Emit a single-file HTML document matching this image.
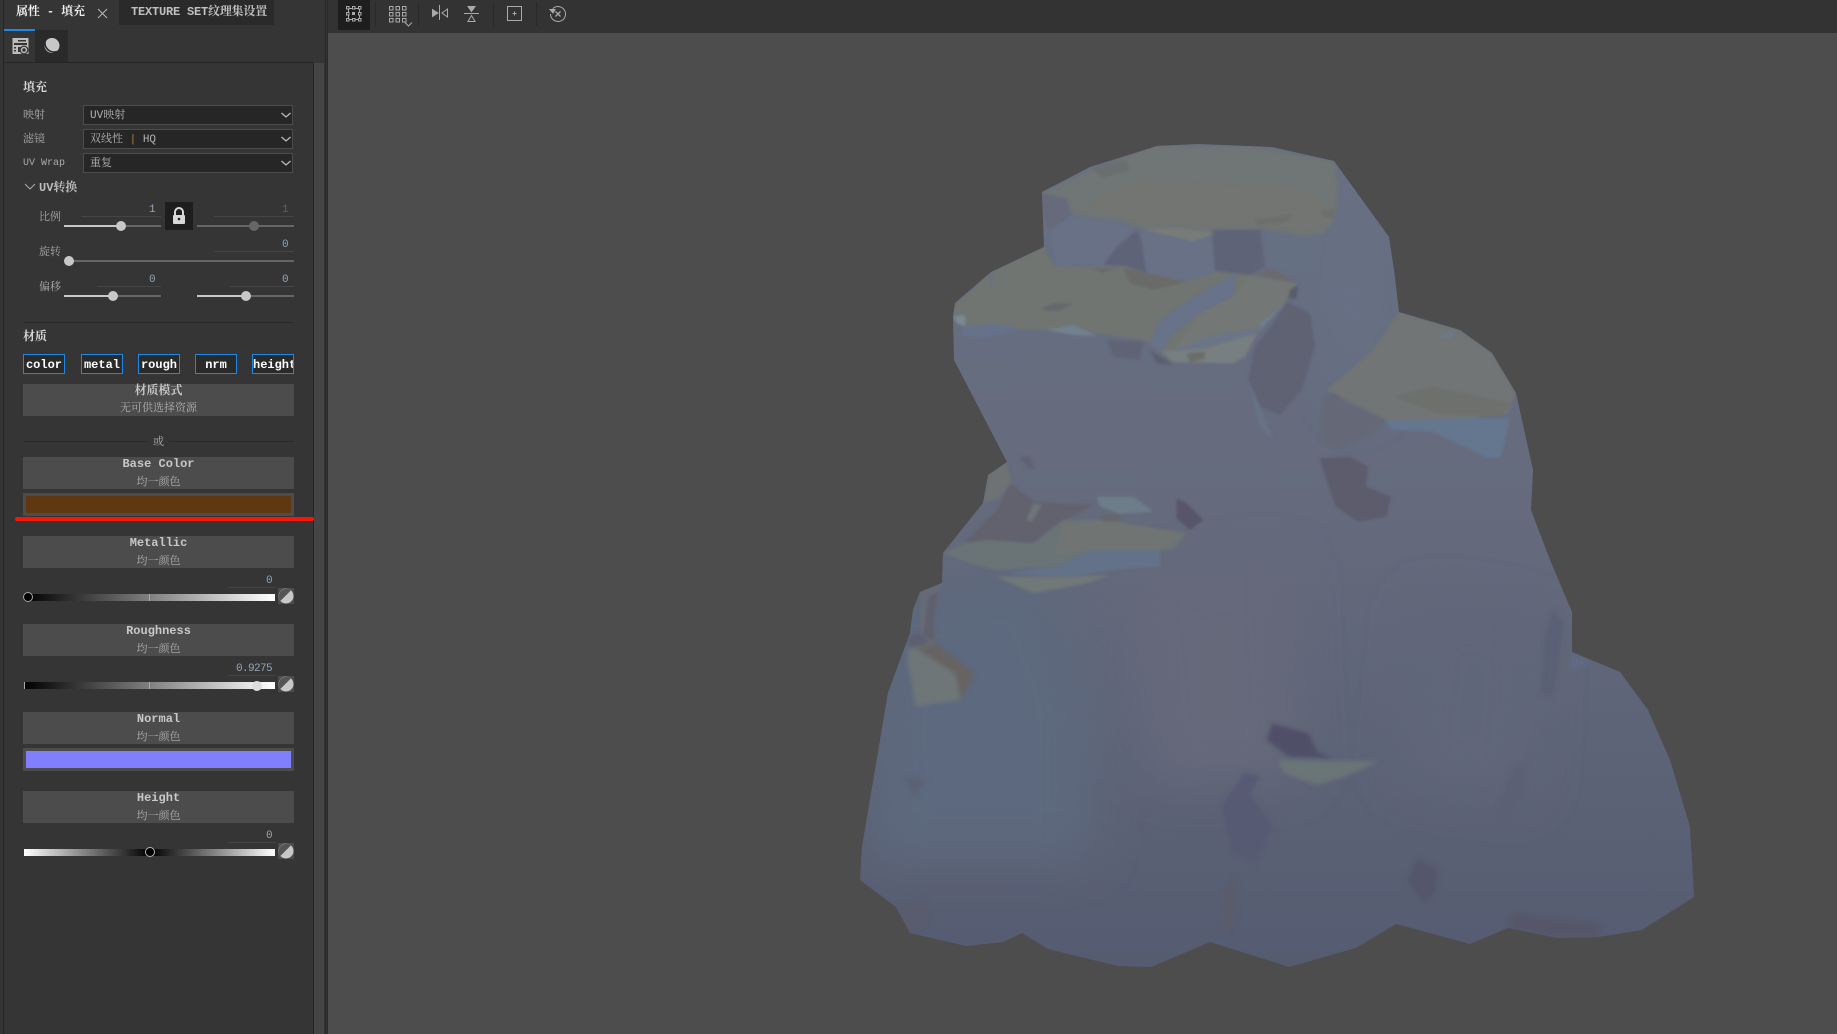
<!DOCTYPE html>
<html lang="zh"><head><meta charset="utf-8"><title>属性 - 填充</title>
<style>
html,body{margin:0;padding:0;background:#4d4d4d}
#r{position:relative;width:1837px;height:1034px;overflow:hidden;background:#4d4d4d;font-family:"Liberation Mono","Noto Serif CJK SC",serif;color:#c4c4c4;font-size:11px}
#r div,#r svg{position:absolute}
.t{line-height:14px;white-space:nowrap}
.b{font-weight:bold;font-size:12px;color:#d8d8d8}
.l{color:#aaa}
.n{font-size:11px;letter-spacing:-.6px;color:#94a4b8;text-align:right;width:50px}
.u{height:1px;background:#454545}
.dd{left:83px;width:208px;height:18px;background:#262626;border:1px solid #4c4c4c;line-height:21px;color:#b4b4b4;text-indent:6px}
.tr{height:2px;background:#666}
.fl{height:2px;background:#c8c8c8}
.k{width:10px;height:10px;border-radius:50%;background:#c8c8c8}
.bt{top:354px;height:18px;width:40px;border:1px solid #1e88e8;background:#2a2a2a;color:#fff;font-weight:bold;font-size:12px;line-height:20px;text-align:center}
.bx{left:23px;width:271px;height:32px;background:#4c4c4c}
.ct{left:23px;width:271px;text-align:center;line-height:14px}
.gr{left:24px;width:251px;height:7px;background:linear-gradient(90deg,#000,#fff)}
</style></head><body><div id="r">

<!-- viewport -->
<div style="left:328px;top:0;width:1509px;height:33px;background:#333"></div>
<div style="left:338px;top:0;width:32px;height:30px;background:#1e1e1e"></div>
<div style="left:375px;top:2px;width:1px;height:24px;background:#292929"></div>
<div style="left:418px;top:2px;width:1px;height:24px;background:#292929"></div>
<div style="left:493px;top:2px;width:1px;height:24px;background:#292929"></div>
<div style="left:536px;top:2px;width:1px;height:24px;background:#292929"></div>
<svg style="left:330px;top:0" width="260" height="33" viewBox="0 0 260 33" fill="none" stroke="#aaa" stroke-width="1">
<rect x="18.500" y="8.500" width="11" height="11"/>
<g fill="#1e1e1e"><rect x="16.500" y="6.500" width="2.500" height="2.500"/><rect x="22.500" y="6.500" width="2.500" height="2.500"/><rect x="28.500" y="6.500" width="2.500" height="2.500"/><rect x="16.500" y="12.500" width="2.500" height="2.500"/><rect x="28.500" y="12.500" width="2.500" height="2.500"/><rect x="16.500" y="18.500" width="2.500" height="2.500"/><rect x="22.500" y="18.500" width="2.500" height="2.500"/><rect x="28.500" y="18.500" width="2.500" height="2.500"/></g>
<rect x="22.500" y="12.500" width="2" height="2" fill="#aaa"/>
<g><rect x="59.500" y="6.500" width="3.500" height="3.500"/><rect x="66" y="6.500" width="3.500" height="3.500"/><rect x="72.500" y="6.500" width="3.500" height="3.500"/><rect x="59.500" y="12.500" width="3.500" height="3.500"/><rect x="66" y="12.500" width="3.500" height="3.500"/><rect x="72.500" y="12.500" width="3.500" height="3.500"/><rect x="59.500" y="18.500" width="3.500" height="3.500"/><rect x="66" y="18.500" width="3.500" height="3.500"/><rect x="72.500" y="18.500" width="3.500" height="3.500"/></g>
<path d="M75 22.500l3.500 3.500 3.500-3.500"/>
<path d="M102.500 9.500l5.500 3.500-5.500 3.500z" fill="#aaa"/><path d="M109.500 5v15"/><path d="M117.500 9l-5.500 4 5.500 4z"/>
<path d="M134 13.500h15"/><path d="M138 6.500h7l-3.500 5z" fill="#aaa"/><path d="M138 21.500h7l-3.500-6z"/>
<rect x="177.500" y="6.500" width="14" height="14"/><path d="M184.500 11.500v4M182.500 13.500h4"/>
<path d="M222.700 8.700A7.500 7.500 0 1 1 220.500 14"/><path d="M220 9.500l3 3.500 2-3.500z" fill="#aaa"/><path d="M225.500 11.500l5 5M230.500 11.500l-5 5" stroke-width="1.300"/>
</svg>

<!-- rock -->
<svg style="left:0;top:0" width="1837" height="1034" viewBox="0 0 1837 1034">
<defs>
<linearGradient id="g" x1="0" y1="0" x2="0" y2="1"><stop offset="0" stop-color="#687084"/><stop offset=".45" stop-color="#656b7c"/><stop offset=".75" stop-color="#5d6377"/><stop offset="1" stop-color="#555b70"/></linearGradient>
<filter id="s" filterUnits="userSpaceOnUse" x="800" y="100" width="950" height="900"><feGaussianBlur stdDeviation="1.300"/></filter>
<filter id="l" filterUnits="userSpaceOnUse" x="800" y="100" width="950" height="900"><feGaussianBlur stdDeviation="2.200"/></filter>
<filter id="m" filterUnits="userSpaceOnUse" x="700" y="0" width="1137" height="1034"><feGaussianBlur stdDeviation="24"/></filter>
<clipPath id="c"><path d="M1042 192L1090 167 1157 146 1198 144 1272 147 1334 161 1389 237 1394 270 1399 312 1460 330 1492 353 1516 393 1533 470 1531 510 1550 560 1572 612 1572 652 1620 672 1648 710 1670 760 1690 827 1694 897 1642 930 1598 937 1558 938 1508 928 1470 944 1396 924 1356 948 1289 967 1210 942 1151 967 1118 966 1048 949 1022 933 1003 942 966 946 910 933 896 907 860 880 862 847 888 693 910 633 913 610 920 592 942 583 943 553 983 503 988 475 1007 462 954 360 953 317 955 303 991 272 1044 247z"/></clipPath>
</defs>
<g clip-path="url(#c)">
<rect x="850" y="140" width="850" height="830" fill="url(#g)"/>
<g filter="url(#m)">
<path d="M880 600L1040 560 1090 700 1090 860 870 860z" fill="#5d697e"/>
<path d="M1130 580L1290 560 1300 780 1150 780z" fill="#65697a"/>
<path d="M1340 200L1395 300 1360 420 1310 300z" fill="#667084"/>
<path d="M1420 600L1540 620 1530 800 1400 780z" fill="#606679"/>
</g>
<g filter="url(#s)">
<!-- top rock -->
<g transform="translate(1040 140) scale(.3333)">
<path d="M5 160L150 90 350 17 640 20 885 65 895 140 885 240 850 280 790 290 660 265 630 275 530 265 520 280 460 305 310 265 240 245 100 225 80 180z" fill="#707574"/>
<path d="M300 120L800 150 880 230 850 275 650 260 300 250 150 190z" fill="#727571"/>
<path d="M155 85L260 60 270 90 190 115z" fill="#6b6e70"/>
<path d="M640 240L760 225 740 245 660 255zM840 215L885 205 885 235 850 230z" fill="#6c6e6c"/>
<path d="M5 160L80 175 90 225 30 275 10 230z" fill="#666a7a"/>
<path d="M30 270L100 228 250 250 300 280 310 268 460 305 525 280 525 390 450 430 330 405 260 380 45 380z" fill="#687186"/>
<path d="M190 375L230 320 290 270 305 300 320 405 260 380z" fill="#5f6478"/>
<path d="M515 270L660 268 675 380 620 410 525 390z" fill="#5f6377"/>
<path d="M310 268L460 305 525 280 420 265z" fill="#787c78"/>
<path d="M675 275L790 295 850 285 840 400 760 400 680 380z" fill="#667083"/>
</g>
<!-- left rock top -->
<g transform="translate(940 240) scale(.3333)">
<path d="M40 230L45 195 155 95 310 20 345 80 555 78 620 100 740 125 830 95 930 105 1070 130 1040 185 960 270 915 350 880 370 700 370 630 310 610 300 400 270 240 270 170 250 70 260z" fill="#707472"/>
<path d="M150 100L160 95 150 165z" fill="#687080"/>
<path d="M630 310L660 240 760 170 890 100 880 170 780 220 690 290 665 335z" fill="#677288"/>
<path d="M665 335L800 325 950 280 915 350 880 370 700 365z" fill="#787f80"/>
<path d="M700 335L800 290 960 262 950 282 780 325z" fill="#6a7588"/>
<path d="M880 170L930 105 1070 130 1000 230 950 262 800 290 700 335 780 220z" fill="#737774"/>
<path d="M960 250L1040 185 960 272z" fill="#6f7e8a"/>
<path d="M550 85L620 100 740 125 640 150 570 130z" fill="#6a6a68"/>
<path d="M445 85L530 85 490 97z" fill="#69696a"/>
<path d="M740 340L795 335 795 355 750 368z" fill="#6b6d6b"/>
<path d="M940 100L1000 85 1070 130 1020 120z" fill="#6a6b6e"/>
<path d="M305 205L340 190 400 190 360 212 320 212z" fill="#65686c"/>
<path d="M40 230L75 225 75 258 50 250z" fill="#7a8a90"/>
<path d="M320 270L400 255 470 288 400 285z" fill="#728190"/>
<path d="M70 260L170 250 240 270 130 295 60 285z" fill="#66718a"/>
<path d="M500 300L610 305 600 360 520 350z" fill="#606474"/>
<path d="M630 330L700 375 650 370z" fill="#5a5e6e"/>
<path d="M1040 185L1110 220 1125 320 1085 450 1020 525 960 500 925 420 945 320 1000 250z" fill="#5f6273"/>
<path d="M1050 150L1075 135 1070 175 1045 175z" fill="#585b6c"/>
<path d="M925 420L960 500 1000 600 960 560z" fill="#687386"/>
<path d="M1140 540L1165 470 1200 440 1200 625 1160 610z" fill="#5f6374"/>
<path d="M240 650L270 650 285 690 260 680z" fill="#5e6172"/>
</g>
<!-- right rock -->
<g transform="translate(840 120) scale(.4591 .3333)">
<path d="M1217 575L1350 630 1420 700 1472 820 1455 880 1350 900 1190 900 1060 810 1160 690z" fill="#717574"/>
<path d="M1300 650L1340 630 1330 655z" fill="#6a7a8c"/>
<path d="M1060 820L1190 900 1150 950 1080 985 1045 960 1045 880z" fill="#656977"/>
<path d="M1190 900L1350 895 1460 895 1440 1010 1410 1015 1290 935 1200 930z" fill="#65768f"/>
<path d="M1210 830L1290 800 1460 850 1440 890 1300 880z" fill="#6e706e"/>
<path d="M1045 1015L1110 1010 1150 1040 1145 1100 1200 1130 1190 1190 1130 1205 1080 1160 1060 1080z" fill="#5b5c6d"/>
</g>
<!-- lower left ledge -->
<g transform="translate(920 440) scale(.3333)">
<path d="M205 105L260 65 275 130 235 175 190 190z" fill="#6e7274"/>
<path d="M130 310L230 210 270 130 345 185 520 195 400 260 340 310 200 300z" fill="#62626e"/>
<path d="M320 240L340 190 365 195 335 245z" fill="#6e747a"/>
<path d="M70 340L130 310 200 300 340 310 430 240 550 240 800 280 760 330 520 330 400 380 230 390 150 370z" fill="#6b7376"/>
<path d="M430 250L550 240 800 280 720 330 520 330 400 345z" fill="#707573"/>
<path d="M400 380L520 330 720 330 720 380 620 385 440 410 260 400z" fill="#647288"/>
<path d="M230 410L440 410 570 405 500 430 340 460z" fill="#707878"/>
<path d="M530 170L640 170 700 215 600 222 540 200z" fill="#6d7d8a"/>
<path d="M540 225L610 225 590 245 550 245z" fill="#656766"/>
<path d="M770 175L800 190 850 240 810 270 770 235z" fill="#585569"/>
<path d="M0 455L65 430 40 550 50 610 0 630z" fill="#656a76"/>
<path d="M25 470L55 455 40 550 45 600 10 590z" fill="#5f616e"/>
</g>
</g>
<g filter="url(#l)">
<!-- lower details -->
<g transform="translate(840 560) scale(.5612 .3333)">
<path d="M125 240L170 250 240 340 215 420 135 440 120 300z" fill="#6e7678"/>
<path d="M135 265L170 250 240 340 215 420 205 340z" fill="#666462"/>
<path d="M120 230L145 220 160 250 125 265z" fill="#5c5e6e"/>
<path d="M770 490L835 520 850 575 880 595 800 590 760 540z" fill="#505068"/>
<path d="M780 600L960 605 900 650 850 675 790 640z" fill="#6a7477"/>
<path d="M680 740L720 640 750 650 730 700 770 800 740 910 700 880z" fill="#565a72"/>
<path d="M1010 960L1030 895 1065 930 1060 1000 1040 1030z" fill="#53576c"/>
<path d="M1200 1060L1350 1090 1360 1130 1280 1133 1190 1105z" fill="#56566a"/>
<path d="M685 1000L705 950 705 1090 680 1130z" fill="#5a5c6c"/>
<path d="M100 1040L150 1020 160 1080 125 1120z" fill="#585b6d"/>
<path d="M1270 145L1290 190 1270 410 1250 400 1255 240z" fill="#5a6075"/>
<path d="M1300 280L1340 310 1300 330z" fill="#606a82"/>
<path d="M115 650L155 660 130 710z" fill="#5c6276"/>
<path d="M1200 620L1225 610 1220 690 1190 780 1170 760z" fill="#5c6074"/>
</g>
</g>
</g>
</svg>

<!-- panel -->
<div style="left:0;top:0;width:328px;height:1034px;background:#353535"></div>
<div style="left:3px;top:0;width:1px;height:1034px;background:#262626"></div>
<div style="left:313px;top:63px;width:1px;height:971px;background:#262626"></div>
<div style="left:314px;top:63px;width:10px;height:971px;background:#454545"></div>
<div style="left:325px;top:0;width:1px;height:1034px;background:#262626"></div>
<div style="left:327px;top:0;width:1px;height:1034px;background:#2a2a2a"></div>
<div style="left:4px;top:62px;width:310px;height:1px;background:#262626"></div>

<!-- tabs -->
<div style="left:4px;top:29px;width:31px;height:2px;background:#1e88e8"></div>
<div class="t b" style="left:16px;top:5px;color:#eee;letter-spacing:-.1px">属性 - 填充</div>
<svg style="left:96px;top:6px" width="14" height="14" fill="none" stroke="#b8b8b8"><path d="M2 3l9 9M11 3l-9 9"/></svg>
<div style="left:119px;top:0;width:155px;height:25px;background:#2a2a2a"></div>
<div class="t b" style="left:131px;top:5px;color:#c0c0c0;letter-spacing:-.2px">TEXTURE SET纹理集设置</div>
<div style="left:35px;top:30px;width:33px;height:32px;background:#2a2a2a"></div>
<svg style="left:10px;top:36px" width="20" height="20" fill="none">
<path d="M2.500 2h16v16h-16z" fill="#bdbdbd"/><path d="M4 7h13v2H4zM8 11h4v5H8z" fill="#353535"/><path d="M4 11h2v1.500H4zM4 14h2v1.500H4zM8 4h8v1.500H8z" fill="#353535"/>
<circle cx="14" cy="14" r="4.500" fill="#353535"/><circle cx="14" cy="14" r="2.500" stroke="#bdbdbd" stroke-width="1.500"/></svg>
<svg style="left:42px;top:36px" width="20" height="20"><circle cx="10" cy="9.500" r="7.500" fill="#c8c8c8"/><path d="M3.500 4A9 9 0 0 0 15 15.500" fill="none" stroke="#2a2a2a" stroke-width="1.700"/></svg>

<div class="t b" style="left:23px;top:81px">填充</div>
<div class="t l" style="left:23px;top:109px">映射</div>
<div class="t l" style="left:23px;top:133px">滤镜</div>
<div class="t l" style="left:23px;top:157px;font-size:10px">UV Wrap</div>
<div class="dd" style="top:105px">UV映射</div>
<div class="dd" style="top:129px">双线性 <span style="color:#b0813a">|</span> HQ</div>
<div class="dd" style="top:153px">重复</div>
<svg style="left:280px;top:110px" width="12" height="60" fill="none" stroke="#c0c0c0" stroke-width="1.200"><path d="M1.500 3l4.500 4 4.500-4M1.500 27l4.500 4 4.500-4M1.500 51l4.500 4 4.500-4"/></svg>
<svg style="left:24px;top:182px" width="12" height="10" fill="none" stroke="#aaa"><path d="M1 2l5 5 5-5"/></svg>
<div class="t b" style="left:39px;top:181px;color:#bdbdbd">UV转换</div>

<div class="t l" style="left:39px;top:211px">比例</div>
<div class="t n" style="left:105px;top:203px">1</div><div class="u" style="left:81px;top:216px;width:80px"></div>
<div class="tr" style="left:64px;top:225px;width:97px"></div><div class="fl" style="left:64px;top:225px;width:57px"></div><div class="k" style="left:116px;top:221px"></div>
<div style="left:165px;top:202px;width:28px;height:28px;background:#1e1e1e"></div>
<svg style="left:165px;top:202px" width="28" height="28"><path d="M10 13v-3a4 4 0 0 1 8 0v3" fill="none" stroke="#d8d8d8" stroke-width="2"/><rect x="8" y="13" width="12" height="9" rx="1" fill="#d8d8d8"/><circle cx="14" cy="17" r="1.300" fill="#1e1e1e"/></svg>
<div class="t n" style="left:238px;top:203px;color:#5a6068">1</div><div class="u" style="left:214px;top:216px;width:80px"></div>
<div class="tr" style="left:197px;top:225px;width:97px"></div><div class="k" style="left:249px;top:221px;background:#666"></div>

<div class="t l" style="left:39px;top:246px">旋转</div>
<div class="t n" style="left:238px;top:238px">0</div><div class="u" style="left:214px;top:251px;width:80px"></div>
<div class="tr" style="left:64px;top:260px;width:230px"></div><div class="k" style="left:64px;top:256px"></div>

<div class="t l" style="left:39px;top:281px">偏移</div>
<div class="t n" style="left:105px;top:273px">0</div><div class="u" style="left:97px;top:286px;width:64px"></div>
<div class="tr" style="left:64px;top:295px;width:97px"></div><div class="fl" style="left:64px;top:295px;width:49px"></div><div class="k" style="left:108px;top:291px"></div>
<div class="t n" style="left:238px;top:273px">0</div><div class="u" style="left:230px;top:286px;width:64px"></div>
<div class="tr" style="left:197px;top:295px;width:97px"></div><div class="fl" style="left:197px;top:295px;width:49px"></div><div class="k" style="left:241px;top:291px"></div>

<div style="left:23px;top:322px;width:271px;height:1px;background:#2a2a2a"></div>
<div class="t b" style="left:23px;top:330px">材质</div>
<div class="bt" style="left:23px">color</div>
<div class="bt" style="left:81px">metal</div>
<div class="bt" style="left:138px">rough</div>
<div class="bt" style="left:195px">nrm</div>
<div class="bt" style="left:252px;overflow:hidden">height</div>

<div class="bx" style="top:384px"></div>
<div class="ct b" style="top:384px;color:#c8c8c8">材质模式</div>
<div class="ct" style="top:402px;color:#b0b0b0">无可供选择资源</div>
<div style="left:23px;top:441px;width:124px;height:1px;background:#2a2a2a"></div>
<div style="left:169px;top:441px;width:125px;height:1px;background:#2a2a2a"></div>
<div class="ct" style="top:436px;color:#b0b0b0">或</div>

<div class="bx" style="top:457px"></div>
<div class="ct b" style="top:457px;color:#c8c8c8">Base Color</div>
<div class="ct" style="top:476px;color:#b0b0b0">均一颜色</div>
<div style="left:23px;top:493px;width:271px;height:23px;background:#4c4c4c"></div>
<div style="left:26px;top:496px;width:265px;height:17px;background:#5f3811"></div>
<div style="left:15px;top:517px;width:299px;height:4px;background:#fb1505;border-radius:2px"></div>

<div class="bx" style="top:536px"></div>
<div class="ct b" style="top:536px;color:#c8c8c8">Metallic</div>
<div class="ct" style="top:555px;color:#b0b0b0">均一颜色</div>
<div class="t n" style="left:222px;top:574px">0</div><div class="u" style="left:228px;top:587px;width:48px"></div>
<div class="gr" style="top:594px"></div>
<div style="left:149px;top:594px;width:1px;height:7px;background:#aaa"></div>
<div style="left:23px;top:592px;width:10px;height:10px;border-radius:50%;background:#000;box-shadow:inset 0 0 0 1px #aaa"></div>

<div class="bx" style="top:624px"></div>
<div class="ct b" style="top:624px;color:#c8c8c8">Roughness</div>
<div class="ct" style="top:643px;color:#b0b0b0">均一颜色</div>
<div class="t n" style="left:222px;top:662px">0.9275</div><div class="u" style="left:228px;top:675px;width:48px"></div>
<div class="gr" style="top:682px"></div>
<div style="left:24px;top:682px;width:1px;height:7px;background:#aaa"></div>
<div style="left:149px;top:682px;width:1px;height:7px;background:#aaa"></div>
<div class="k" style="left:252px;top:681px;background:#ddd"></div>

<div class="bx" style="top:712px"></div>
<div class="ct b" style="top:712px;color:#c8c8c8">Normal</div>
<div class="ct" style="top:731px;color:#b0b0b0">均一颜色</div>
<div style="left:23px;top:748px;width:271px;height:23px;background:#4c4c4c"></div>
<div style="left:26px;top:751px;width:265px;height:17px;background:#8080ff"></div>

<div class="bx" style="top:791px"></div>
<div class="ct b" style="top:791px;color:#c8c8c8">Height</div>
<div class="ct" style="top:810px;color:#b0b0b0">均一颜色</div>
<div class="t n" style="left:222px;top:829px">0</div><div class="u" style="left:228px;top:842px;width:48px"></div>
<div class="gr" style="top:849px;background:linear-gradient(90deg,#fff,#000 50%,#fff)"></div>
<div style="left:145px;top:847px;width:10px;height:10px;border-radius:50%;background:#000;box-shadow:inset 0 0 0 1px #bbb"></div>

<svg style="left:278px;top:588px" width="16" height="16"><rect width="16" height="16" fill="#4c4c4c"/><circle cx="8" cy="8" r="7.500" fill="#c8c8c8"/><path d="M2.700 13.300A7.500 7.500 0 0 1 13.300 2.700z" fill="#555"/><path d="M2.700 13.300L13.300 2.700" stroke="#c8c8c8"/></svg>
<svg style="left:278px;top:676px" width="16" height="16"><rect width="16" height="16" fill="#4c4c4c"/><circle cx="8" cy="8" r="7.500" fill="#c8c8c8"/><path d="M2.700 13.300A7.500 7.500 0 0 1 13.300 2.700z" fill="#555"/><path d="M2.700 13.300L13.300 2.700" stroke="#c8c8c8"/></svg>
<svg style="left:278px;top:843px" width="16" height="16"><rect width="16" height="16" fill="#4c4c4c"/><circle cx="8" cy="8" r="7.500" fill="#c8c8c8"/><path d="M2.700 13.300A7.500 7.500 0 0 1 13.300 2.700z" fill="#555"/><path d="M2.700 13.300L13.300 2.700" stroke="#c8c8c8"/></svg>
</div></body></html>
